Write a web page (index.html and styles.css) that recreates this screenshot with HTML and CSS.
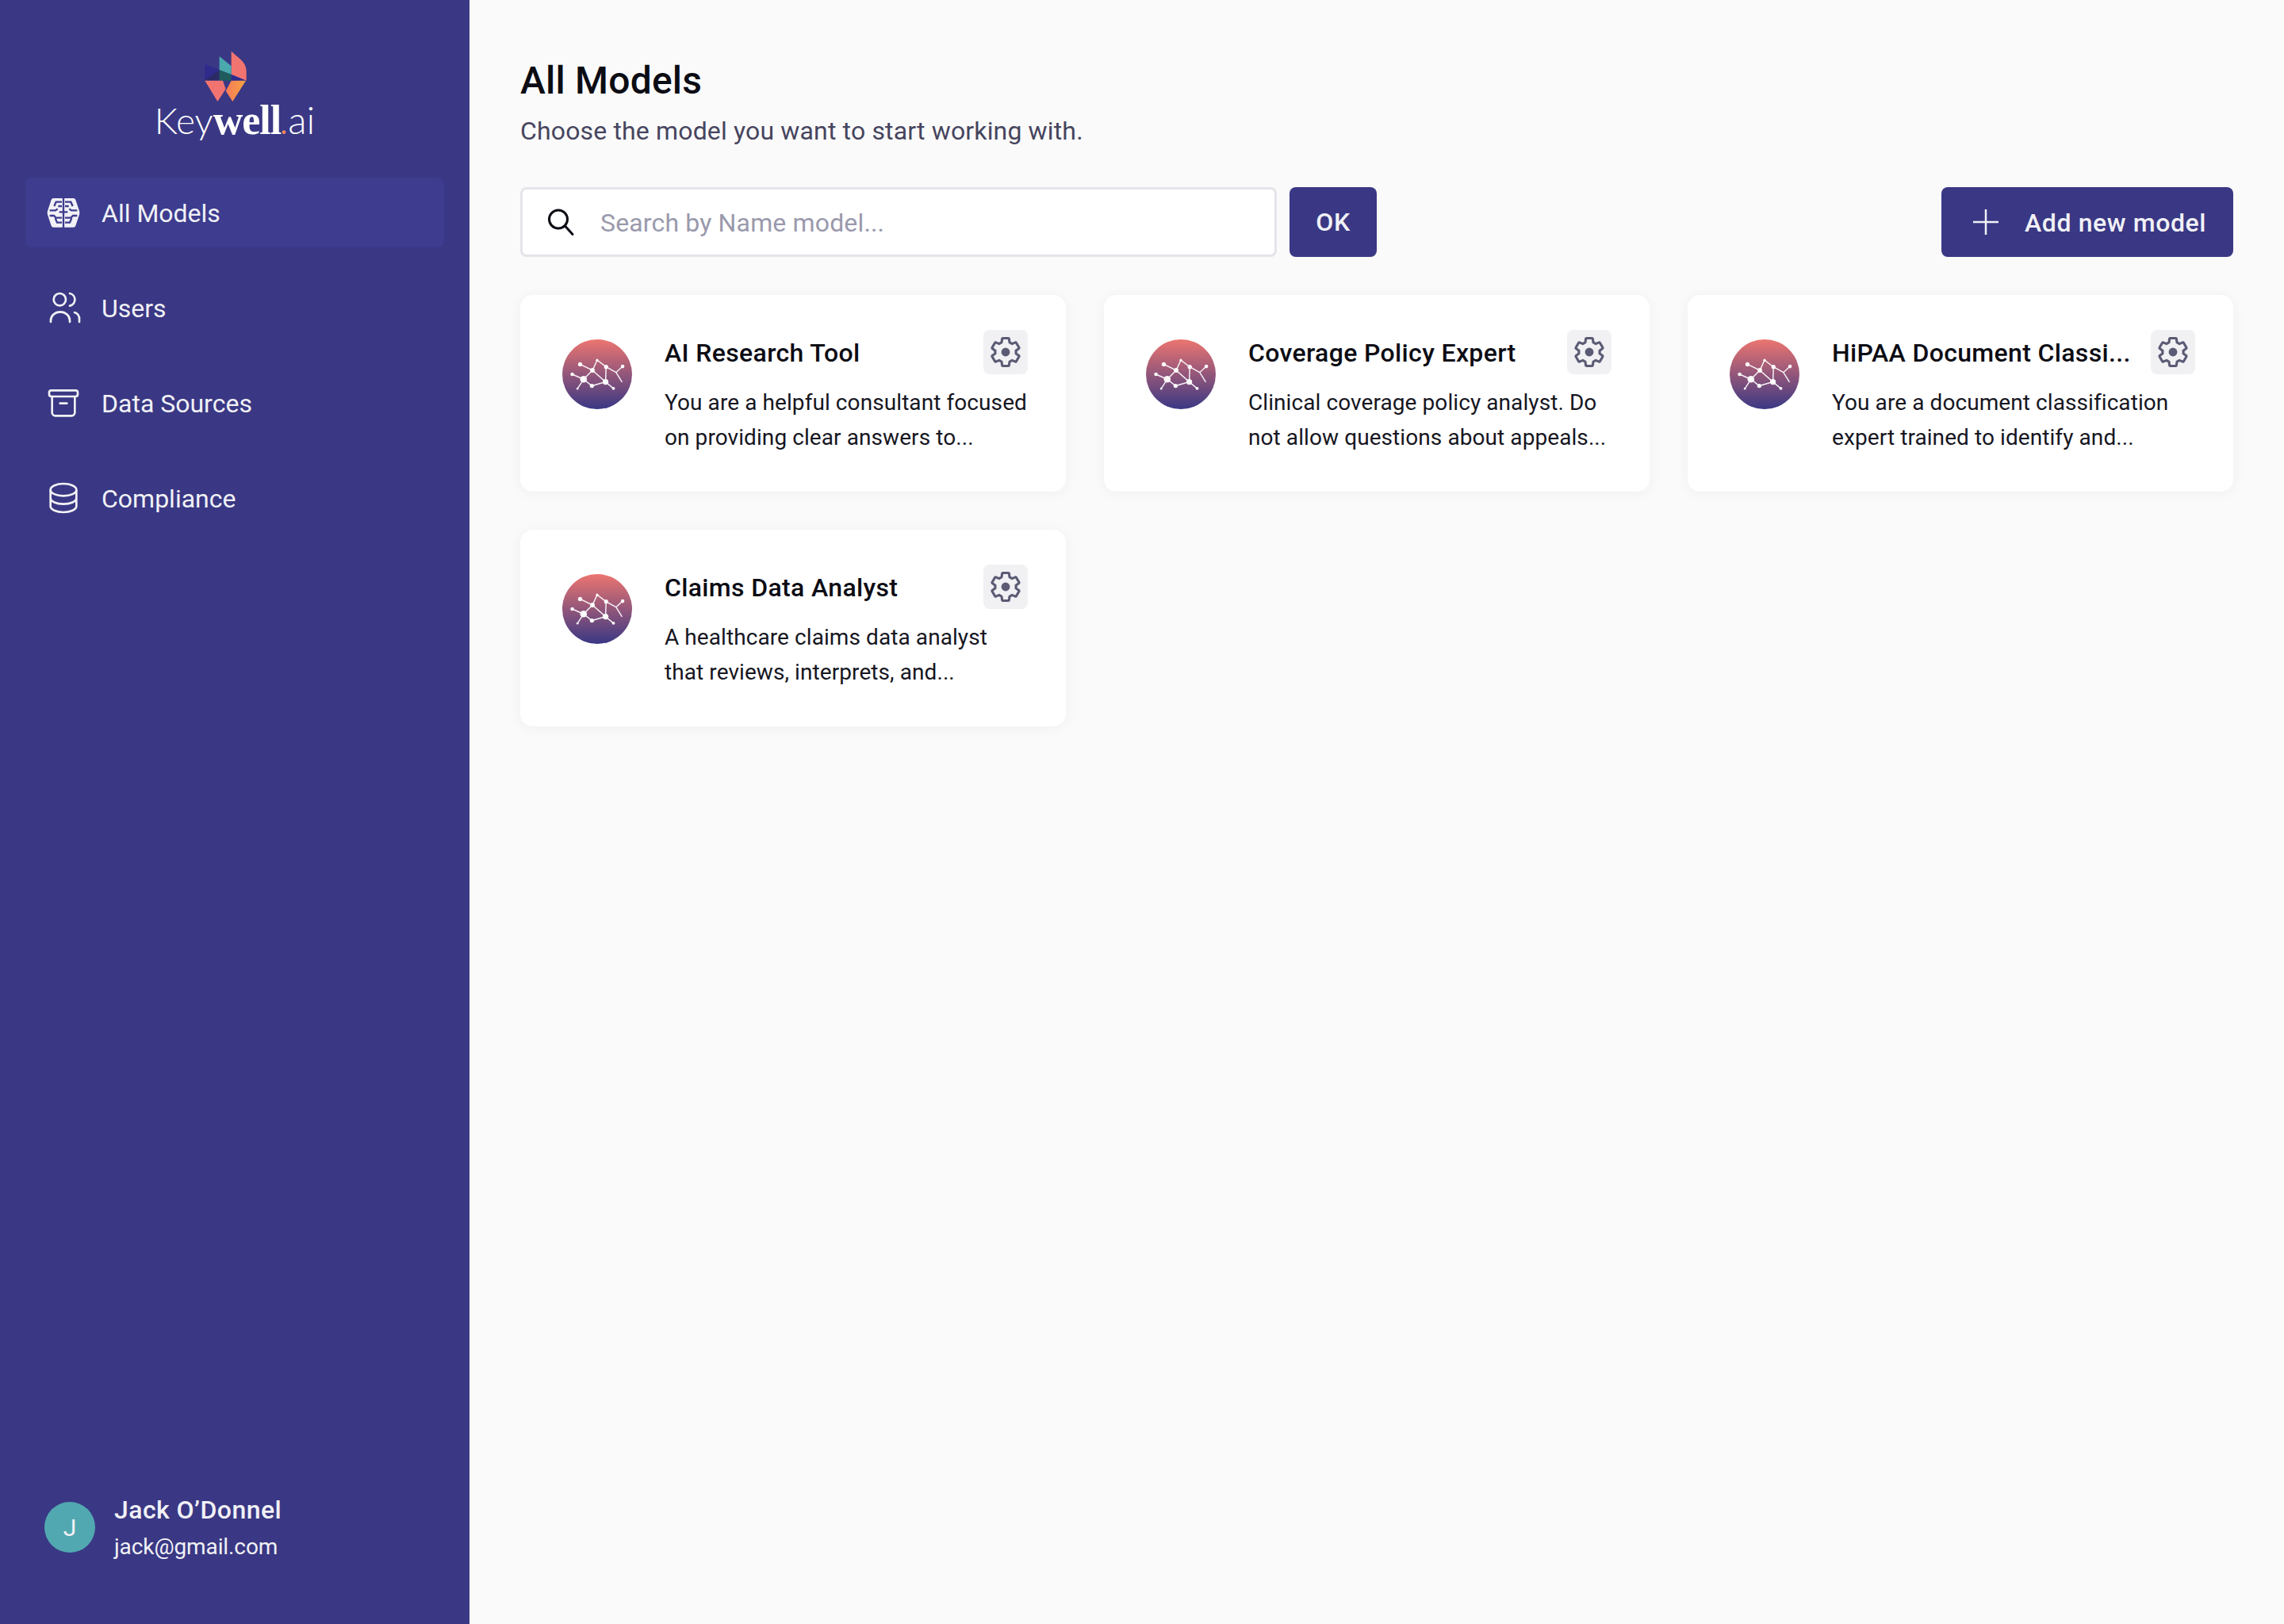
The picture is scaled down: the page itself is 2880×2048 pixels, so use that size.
FILE: index.html
```html
<!DOCTYPE html>
<html lang="en">
<head>
<meta charset="utf-8">
<title>All Models</title>
<link rel="stylesheet" href="styles.css">
</head>
<body>
<svg class="sprites" width="0" height="0" aria-hidden="true">
  <defs>
    <linearGradient id="orb" x1="0" y1="0" x2="0" y2="1">
      <stop offset="0" stop-color="#ec7570"/>
      <stop offset="1" stop-color="#3a3884"/>
    </linearGradient>
    <linearGradient id="petal" x1="0" y1="0" x2="1" y2="0">
      <stop offset="0" stop-color="#f47a5c"/>
      <stop offset="1" stop-color="#f9a33f"/>
    </linearGradient>
    <symbol id="orb-icon" viewBox="57 52 266 266">
      <circle cx="190" cy="185" r="133" fill="url(#orb)"/>
      <g stroke="#fff" stroke-width="4.500" opacity=".92" fill="none">
        <path d="M125 147 172 170 190 131 224 157 262 178 287 155M262 178 285 215M224 157 222 214 172 170 138 204 95 185M138 204 115 240M138 204 170 229 222 214 252 239"/>
      </g>
      <g fill="#fff" opacity=".95">
        <circle cx="125" cy="147" r="8"/><circle cx="95" cy="185" r="7"/><circle cx="138" cy="204" r="13"/>
        <circle cx="172" cy="170" r="9"/><circle cx="190" cy="131" r="5"/><circle cx="224" cy="157" r="8"/>
        <circle cx="287" cy="155" r="7"/><circle cx="222" cy="214" r="11"/><circle cx="252" cy="239" r="6"/>
        <circle cx="170" cy="229" r="8"/><circle cx="115" cy="240" r="4"/>
      </g>
    </symbol>
    <symbol id="gear-icon" viewBox="0 0 24 24">
      <path fill="none" stroke="#5c5b75" stroke-width="1.800" stroke-linejoin="round" d="M19.43 12.98c.04-.32.07-.64.07-.98 0-.34-.03-.66-.07-.98l2.11-1.65c.19-.15.24-.42.12-.64l-2-3.46c-.12-.22-.39-.3-.61-.22l-2.49 1c-.52-.4-1.08-.73-1.69-.98l-.38-2.65C14.46 2.18 14.25 2 14 2h-4c-.25 0-.46.18-.49.42l-.38 2.65c-.61.25-1.17.59-1.69.98l-2.49-1c-.23-.09-.49 0-.61.22l-2 3.46c-.13.22-.07.49.12.64l2.11 1.65c-.04.32-.07.65-.07.98 0 .33.03.66.07.98l-2.11 1.65c-.19.15-.24.42-.12.64l2 3.46c.12.22.39.3.61.22l2.49-1c.52.4 1.08.73 1.69.98l.38 2.65c.03.24.24.42.49.42h4c.25 0 .46-.18.49-.42l.38-2.65c.61-.25 1.17-.59 1.69-.98l2.49 1c.23.09.49 0 .61-.22l2-3.46c.12-.22.07-.49-.12-.64l-2.11-1.65z"/>
      <circle cx="12" cy="12" r="3.100" fill="#5c5b75"/>
    </symbol>
  </defs>
</svg>
<div class="app">
  <aside class="sidebar">
    <div class="brand">
      <svg class="brand-mark" viewBox="320 70 165 195" aria-hidden="true">
        <path d="M424 72 456 100 C472 114 481 128 481 150 V183 L424 160Z" fill="#f27470"/>
        <path d="M379 91 424 128 V160 L379 143Z" fill="#4aa9ad"/>
        <path d="M324 120 379 143 324 182Z" fill="#2e2b8c"/>
        <path d="M379 143 324 182H379Z" fill="#2c2a66"/>
        <path d="M379 143 424 160V183H379Z" fill="#1f5b5c"/>
        <path d="M424 160 481 183H424Z" fill="#2e2b8c"/>
        <path d="M324 183H392L403 215 372 262Z" fill="#f27470"/>
        <path d="M424 183H479L429 262 403 222Z" fill="url(#petal)"/>
      </svg>
      <div class="wordmark"><span class="wm-light">Key</span><span class="wm-bold">well</span><span class="wm-dot">.</span><span class="wm-light wm-ai">ai</span></div>
    </div>
    <nav class="nav">
      <a class="nav-item active">
        <svg class="nav-icon" viewBox="18 12 144 144" aria-hidden="true">
          <path d="M52 30H128Q134 30 136 36L150 78Q152 85 150 92L136 134Q134 140 128 140H52Q46 140 44 134L30 92Q28 85 30 78L44 36Q46 30 52 30Z" fill="#f1f1f6"/>
          <path d="M90 26V144M74 82H106M84 44H62L55 60M84 60H70M38 76H60L68 70M38 96H54L62 104H84M84 122H66L59 106M96 44H118L125 60M96 60H110M142 76H120L112 70M142 96H126L118 104H96M96 122H114L121 106" fill="none" stroke="#3d3c8e" stroke-width="7"/>
        </svg>
        <span class="nav-label">All Models</span>
      </a>
      <a class="nav-item">
        <svg class="nav-icon" viewBox="108 462 144 144" fill="none" stroke="#f1f1f6" stroke-width="8" stroke-linecap="round" aria-hidden="true">
          <circle cx="166" cy="503" r="23"/>
          <path d="M204 480A24 24 0 0 1 204 527M132 588V582A36 32 0 0 1 204 582V588M222 552A24 24 0 0 1 240 578V588"/>
        </svg>
        <span class="nav-label">Users</span>
      </a>
      <a class="nav-item">
        <svg class="nav-icon" viewBox="108 821 144 144" fill="none" stroke="#f1f1f6" stroke-width="8" stroke-linecap="round" aria-hidden="true">
          <rect x="126" y="846" width="108" height="23" rx="8"/>
          <path d="M137 869V930A12 12 0 0 0 149 942H211A12 12 0 0 0 223 930V869M167 895H193"/>
        </svg>
        <span class="nav-label">Data Sources</span>
      </a>
      <a class="nav-item">
        <svg class="nav-icon" viewBox="108 1181 144 144" fill="none" stroke="#f1f1f6" stroke-width="8" aria-hidden="true">
          <ellipse cx="180" cy="1222" rx="49" ry="23"/>
          <path d="M131 1222V1284C131 1297 153 1307 180 1307S229 1297 229 1284V1222M131 1253C131 1266 153 1276 180 1276S229 1266 229 1253"/>
        </svg>
        <span class="nav-label">Compliance</span>
      </a>
    </nav>
    <div class="user">
      <div class="user-avatar">J</div>
      <div class="user-info">
        <div class="user-name">Jack O’Donnel</div>
        <div class="user-mail">jack@gmail.com</div>
      </div>
    </div>
  </aside>
  <main class="main">
    <h1 class="title">All Models</h1>
    <p class="subtitle">Choose the model you want to start working with.</p>
    <div class="toolbar">
      <label class="search">
        <svg class="search-icon" viewBox="0 0 36 36" fill="none" stroke="#0c0c14" stroke-width="3" stroke-linecap="round" aria-hidden="true">
          <circle cx="15" cy="14.500" r="11.500"/><path d="M23.500 23 33 33.500"/>
        </svg>
        <span class="placeholder">Search by Name model...</span>
      </label>
      <button class="btn btn-ok">OK</button>
      <button class="btn btn-add">
        <svg class="plus" viewBox="0 0 32 32" stroke="#f1f1f6" stroke-width="2.500" aria-hidden="true"><path d="M16 0V32M0 16H32"/></svg>
        <span class="btn-label">Add new model</span>
      </button>
    </div>
    <section class="cards">
      <article class="card">
        <svg class="orb" aria-hidden="true"><use href="#orb-icon"/></svg>
        <div class="card-body">
          <div class="card-head"><h2 class="card-title">AI Research Tool</h2><span class="gear"><svg aria-hidden="true"><use href="#gear-icon"/></svg></span></div>
          <p class="card-text">You are a helpful consultant focused on providing clear answers to...</p>
        </div>
      </article>
      <article class="card">
        <svg class="orb" aria-hidden="true"><use href="#orb-icon"/></svg>
        <div class="card-body">
          <div class="card-head"><h2 class="card-title">Coverage Policy Expert</h2><span class="gear"><svg aria-hidden="true"><use href="#gear-icon"/></svg></span></div>
          <p class="card-text">Clinical coverage policy analyst. Do not allow questions about appeals...</p>
        </div>
      </article>
      <article class="card">
        <svg class="orb" aria-hidden="true"><use href="#orb-icon"/></svg>
        <div class="card-body">
          <div class="card-head"><h2 class="card-title">HiPAA Document Classi...</h2><span class="gear"><svg aria-hidden="true"><use href="#gear-icon"/></svg></span></div>
          <p class="card-text">You are a document classification expert trained to identify and...</p>
        </div>
      </article>
      <article class="card">
        <svg class="orb" aria-hidden="true"><use href="#orb-icon"/></svg>
        <div class="card-body">
          <div class="card-head"><h2 class="card-title">Claims Data Analyst</h2><span class="gear"><svg aria-hidden="true"><use href="#gear-icon"/></svg></span></div>
          <p class="card-text">A healthcare claims data analyst that reviews, interprets, and...</p>
        </div>
      </article>
    </section>
  </main>
</div>
</body>
</html>
```
FILE: styles.css
```css
* { box-sizing: border-box; }
html, body { margin: 0; height: 100%; }
body { font-family: Roboto, "Noto Sans", sans-serif; background: #fafafa; color: #0c0c14; }
.sprites { position: absolute; }
.app { display: flex; height: 2048px; }

.sidebar { width: 592px; flex: none; background: #3a3884; padding: 64px 32px 64px; display: flex; flex-direction: column; color: #f1f1f6; }
.brand { display: flex; flex-direction: column; align-items: center; height: 160px; }
.brand-mark { width: 55px; height: 65px; display: block; margin-right: 24px; }
.wordmark { font-family: Lato, sans-serif; font-size: 46px; line-height: 46px; color: #fff; display: flex; align-items: baseline; margin-top: -1px; }
.wm-light { font-weight: 300; }
.wm-ai { font-size: 48px; margin-left: 2px; }
.wm-bold { font-family: "Liberation Serif", serif; font-weight: 700; font-size: 52px; letter-spacing: -1px; }
.wm-dot { color: #f4875c; font-weight: 700; font-size: 30px; }
.nav { display: flex; flex-direction: column; gap: 32px; }
.nav-item { height: 88px; display: flex; align-items: center; gap: 24px; padding-left: 24px; border-radius: 8px; font-size: 32px; color: #f1f1f6; }
.nav-item.active { background: #3d3c8e; }
.nav-icon { width: 48px; height: 48px; flex: none; }
.nav-label { padding-top: 2px; }
.user { margin-top: auto; display: flex; align-items: center; gap: 24px; padding-left: 24px; margin-bottom: 14px; }
.user-avatar { width: 64px; height: 64px; border-radius: 50%; background: #52a8b0; display: flex; align-items: center; justify-content: center; font-size: 30px; }
.user-name { font-size: 32px; line-height: 44px; font-weight: 480; letter-spacing: .45px; }
.user-mail { font-size: 28px; line-height: 44px; letter-spacing: -.1px; margin-top: 3px; margin-bottom: -3px; }

.main { flex: 1; padding: 66px 64px 0; }
.title { margin: 0; font-size: 48px; line-height: 72px; font-weight: 480; color: #0c0c14; letter-spacing: .2px; }
.subtitle { margin: 3px 0 0; font-size: 32px; line-height: 48px; color: #46455e; letter-spacing: .15px; }
.toolbar { display: flex; gap: 16px; margin-top: 47px; height: 88px; }
.search { width: 954px; height: 88px; background: #fff; border: 3px solid #e4e4ea; border-radius: 8px; display: flex; align-items: center; gap: 32px; padding-left: 30px; }
.search-icon { width: 36px; height: 36px; flex: none; }
.placeholder { font-size: 32px; color: #9a99ac; letter-spacing: .15px; padding-top: 2px; }
.btn { border: 0; height: 88px; border-radius: 8px; background: #3a3884; color: #f1f1f6; font-family: inherit; font-size: 32px; font-weight: 500; display: flex; align-items: center; padding-top: 1px; }
.btn-ok { width: 110px; justify-content: center; letter-spacing: .5px; }
.btn-add { margin-left: auto; width: 368px; padding: 0 0 0 40px; gap: 33px; }
.btn-label { letter-spacing: .6px; padding-top: 1px; }
.plus { width: 32px; height: 32px; flex: none; }

.cards { display: grid; grid-template-columns: repeat(3, 1fr); gap: 48px; margin-top: 48px; }
.card { height: 248px; background: #fff; border-radius: 16px; box-shadow: 0 2px 16px rgba(60, 60, 100, .05); padding: 56px 48px 0 53px; display: flex; gap: 41px; align-items: flex-start; }
.orb { width: 88px; height: 88px; flex: none; }
.card-body { flex: 1; min-width: 0; margin-top: -12px; }
.card-head { display: flex; justify-content: space-between; align-items: center; height: 56px; }
.card-title { margin: 0; padding-top: 2px; font-size: 32px; font-weight: 480; white-space: nowrap; letter-spacing: .35px; }
.gear { width: 56px; height: 56px; flex: none; background: #f1f1f4; border-radius: 8px; display: flex; align-items: center; justify-content: center; }
.gear svg { width: 42px; height: 42px; }
.card-text { margin: 14px -2px 0 0; font-size: 28px; line-height: 44px; color: #16161f; letter-spacing: .08px; }
```
